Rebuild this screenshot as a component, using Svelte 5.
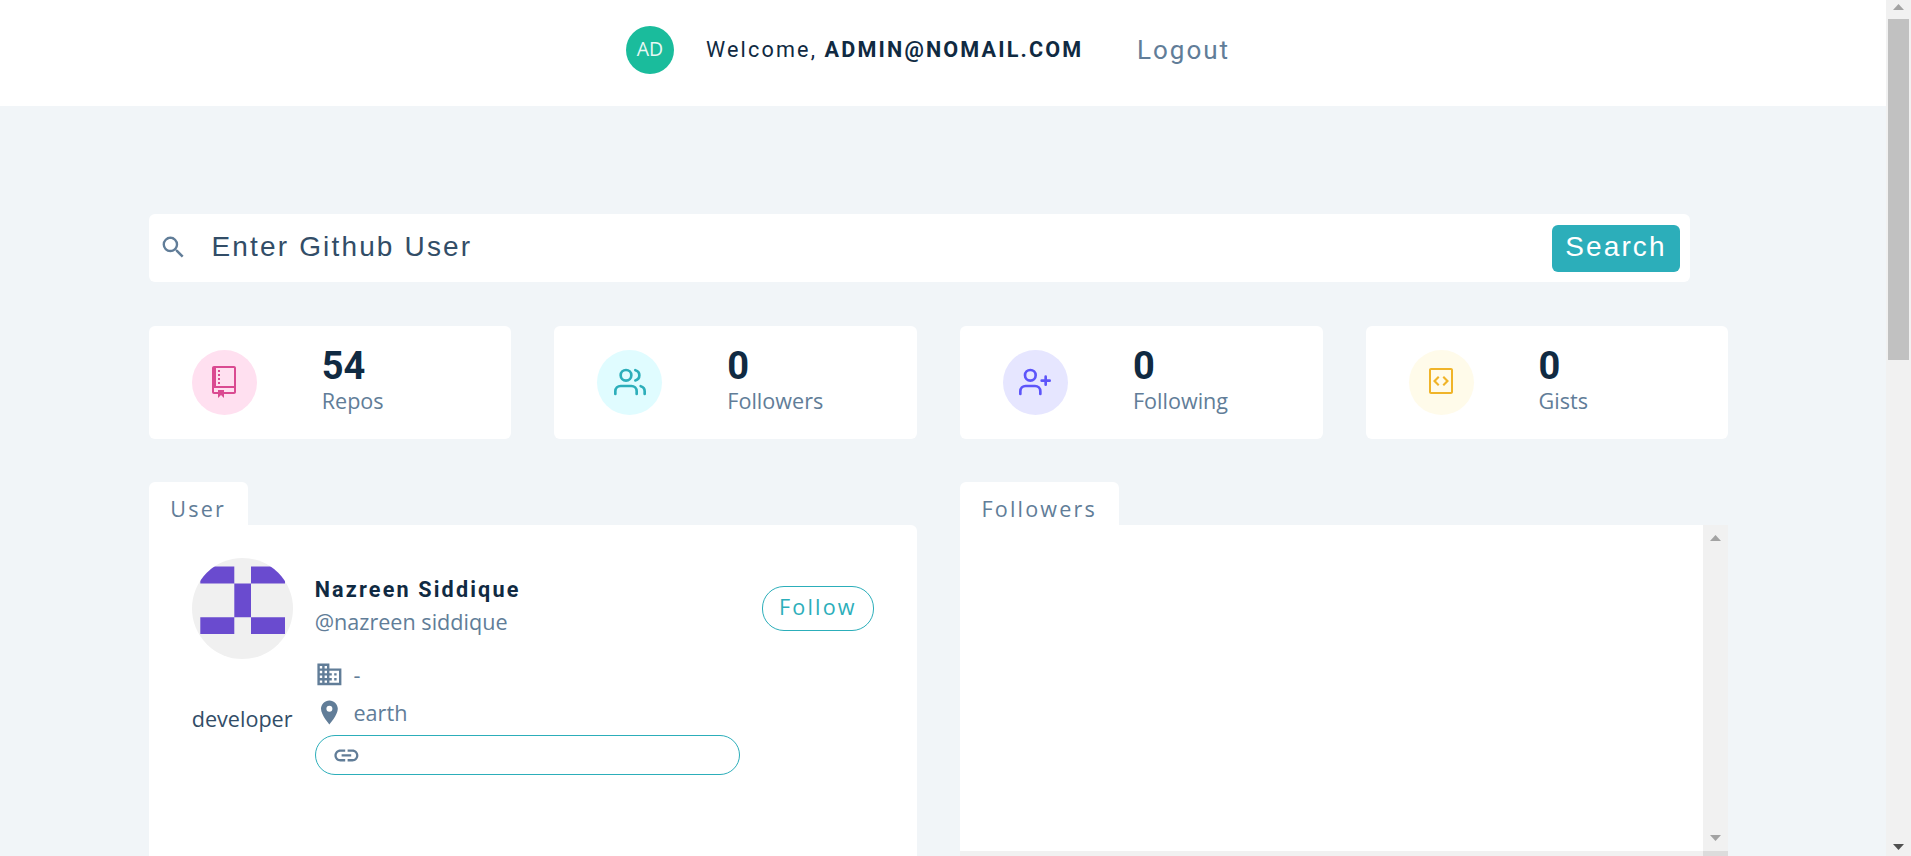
<script>
  const stats = [
    { icon: 'repo', tone: 'pink', value: 54, label: 'Repos' },
    { icon: 'users', tone: 'green', value: 0, label: 'Followers' },
    { icon: 'plus', tone: 'purple', value: 0, label: 'Following' },
    { icon: 'gist', tone: 'yellow', value: 0, label: 'Gists' }
  ];
</script>

<div class="screen">
  <div class="page">
    <nav>
      <div class="initials"><span>AD</span></div>
      <h4>Welcome, <strong>ADMIN@NOMAIL.COM</strong></h4>
      <button class="logout">Logout</button>
    </nav>

    <main>
      <form class="search">
        <svg class="md" viewBox="0 0 24 24"><path d="M15.5 14h-.79l-.28-.27A6.471 6.471 0 0 0 16 9.5 6.5 6.5 0 1 0 9.5 16c1.61 0 3.09-.59 4.23-1.57l.27.28v.79l5 4.99L20.49 19l-4.99-5zm-6 0C7.01 14 5 11.99 5 9.5S7.01 5 9.5 5 14 7.01 14 9.5 11.99 14 9.5 14z" /></svg>
        <span class="placeholder">Enter Github User</span>
        <button type="button">Search</button>
      </form>

      <section class="stats">
        {#each stats as s}
          <article class="stat">
            <span class="badge {s.tone}">
              {#if s.icon === 'repo'}
                <svg viewBox="0 0 12 16" fill="currentColor"><path fill-rule="evenodd" d="M4 9H3V8h1v1zm0-3H3v1h1V6zm0-2H3v1h1V4zm0-2H3v1h1V2zm8-1v12c0 .55-.45 1-1 1H6v2l-1.5-1.5L3 16v-2H1c-.55 0-1-.45-1-1V1c0-.55.45-1 1-1h10c.55 0 1 .45 1 1zm-1 10H1v2h2v-1h3v1h5v-2zm0-10H2v9h9V1z" /></svg>
              {:else if s.icon === 'users'}
                <svg class="line" viewBox="0 0 24 24"><path d="M17 21v-2a4 4 0 0 0-4-4H5a4 4 0 0 0-4 4v2" /><circle cx="9" cy="7" r="4" /><path d="M23 21v-2a4 4 0 0 0-3-3.87M16 3.13a4 4 0 0 1 0 7.75" /></svg>
              {:else if s.icon === 'plus'}
                <svg class="line" viewBox="0 0 24 24"><path d="M16 21v-2a4 4 0 0 0-4-4H5a4 4 0 0 0-4 4v2" /><circle cx="8.5" cy="7" r="4" /><path d="M20 8v6M23 11h-6" /></svg>
              {:else}
                <svg viewBox="0 0 12 16" fill="currentColor"><path fill-rule="evenodd" d="M7.5 5L10 7.5 7.5 10l-.75-.75L8.5 7.5 6.75 5.75 7.5 5zm-3 0L2 7.5 4.5 10l.75-.75L3.5 7.5l1.75-1.75L4.5 5zM0 13V2c0-.55.45-1 1-1h10c.55 0 1 .45 1 1v11c0 .55-.45 1-1 1H1c-.55 0-1-.45-1-1zm1 0h10V2H1v11z" /></svg>
              {/if}
            </span>
            <div class="figures">
              <h3>{s.value}</h3>
              <p>{s.label}</p>
            </div>
          </article>
        {/each}
      </section>

      <section class="panels">
        <div class="panel">
          <div class="tab">User</div>
          <article class="card">
            <header>
              <svg class="avatar" viewBox="0 0 101 101">
                <defs><clipPath id="round"><circle cx="50.5" cy="50.5" r="50.5" /></clipPath></defs>
                <g clip-path="url(#round)">
                  <rect width="101" height="101" fill="#f0f0f0" />
                  <path fill="#6a4bcf" d="M8.3 8.4h34v17h-34zM59 8.4h34v17H59zM42.3 25.4H59v33.8H42.3zM8.3 59.2h34V76h-34zM59 59.2h34V76H59z" />
                </g>
              </svg>
              <div class="who">
                <h4>Nazreen Siddique</h4>
                <p>@nazreen siddique</p>
              </div>
              <button class="follow">Follow</button>
            </header>
            <div class="details">
              <p class="bio">developer</p>
              <div class="links">
                <p><svg class="md" viewBox="0 0 24 24"><path d="M12 7V3H2v18h20V7H12zM6 19H4v-2h2v2zm0-4H4v-2h2v2zm0-4H4V9h2v2zm0-4H4V5h2v2zm4 12H8v-2h2v2zm0-4H8v-2h2v2zm0-4H8V9h2v2zm0-4H8V5h2v2zm10 12h-8v-2h2v-2h-2v-2h2v-2h-2V9h8v10zm-2-8h-2v2h2v-2zm0 4h-2v2h2v-2z" /></svg>-</p>
                <p><svg class="md" viewBox="0 0 24 24"><path d="M12 2C8.13 2 5 5.13 5 9c0 5.25 7 13 7 13s7-7.75 7-13c0-3.87-3.13-7-7-7zm0 9.5a2.5 2.5 0 0 1 0-5 2.5 2.5 0 0 1 0 5z" /></svg>earth</p>
                <div class="site"><svg class="md" viewBox="0 0 24 24"><path d="M3.9 12c0-1.71 1.39-3.1 3.1-3.1h4V7H7c-2.76 0-5 2.24-5 5s2.24 5 5 5h4v-1.9H7c-1.71 0-3.1-1.39-3.1-3.1zM8 13h8v-2H8v2zm9-6h-4v1.9h4c1.71 0 3.1 1.39 3.1 3.1s-1.39 3.1-3.1 3.1h-4V17h4c2.76 0 5-2.24 5-5s-2.24-5-5-5z" /></svg></div>
              </div>
            </div>
          </article>
        </div>

        <div class="panel">
          <div class="tab">Followers</div>
          <div class="list">
            <div class="blank"></div>
            <div class="bar inner">
              <svg viewBox="0 0 11 6"><path fill="#a3a3a3" d="M0 6 5.5 0 11 6z" /></svg>
              <svg viewBox="0 0 11 6"><path fill="#a3a3a3" d="M0 0 5.5 6 11 0z" /></svg>
            </div>
            <div class="track"></div>
            <div class="corner"></div>
          </div>
        </div>
      </section>
    </main>
  </div>

  <div class="bar outer">
    <svg viewBox="0 0 11 6"><path fill="#a3a3a3" d="M0 6 5.5 0 11 6z" /></svg>
    <div class="thumb"></div>
    <svg viewBox="0 0 11 6"><path fill="#505050" d="M0 0 5.5 6 11 0z" /></svg>
  </div>
</div>

<style>
  :global(body) { overflow: hidden; }
  * { box-sizing: border-box; }
  h3, h4, p { margin: 0; }
  button { margin: 0; border: 0; background: none; padding: 0; }
  .screen {
    display: flex;
    width: 1911px;
    height: 856px;
    overflow: hidden;
    background: #f1f5f8;
    color: #324d67;
    font-family: "Open Sans", sans-serif;
    font-size: 21.6px;
  }
  .page { width: 1886px; }
  nav {
    height: 106px;
    padding: 26px 0 0 626px;
    display: flex;
    align-items: flex-start;
    background: #fff;
    font-family: Roboto, sans-serif;
    white-space: nowrap;
  }
  .initials {
    width: 48px;
    height: 48px;
    border-radius: 50%;
    background: #1abc9c;
    color: #e8f8f5;
    font: 400 19.5px/46px "Open Sans", sans-serif;
    text-align: center;
  }
  nav h4 {
    width: 431px;
    margin-left: 32px;
    color: #102a42;
    font-size: 21.6px;
    font-weight: 400;
    line-height: 48px;
    letter-spacing: 2.16px;
  }
  nav strong { font-weight: 700; }
  .logout {
    color: #617d98;
    font: 400 26px/48px Roboto, sans-serif;
    letter-spacing: 2px;
  }
  main { padding: 108px 157.9px 0 148.7px; }
  .search {
    width: 1541.3px;
    height: 68px;
    display: flex;
    align-items: center;
    padding: 0 10px 0 11px;
    border-radius: 6px;
    background: #fff;
    font-family: "Liberation Sans", Arial, sans-serif;
  }
  .md { width: 28.8px; height: 28.8px; fill: #617d98; flex: none; }
  .search .md { margin: 0 .5px 1px -.5px; }
  .placeholder {
    flex: 1;
    margin-left: 23px;
    padding-bottom: 2px;
    font-size: 28px;
    letter-spacing: 2.16px;
    color: #324d67;
  }
  .search button {
    width: 128px;
    height: 47px;
    padding-bottom: 3px;
    border-radius: 6px;
    background: #2caeba;
    color: #fff;
    font: 28px/44px "Liberation Sans", Arial, sans-serif;
    letter-spacing: 2.1px;
  }
  .stats {
    display: grid;
    grid-template-columns: repeat(4, 1fr);
    gap: 43px;
    margin-top: 44px;
  }
  .stat {
    height: 113px;
    display: flex;
    align-items: flex-start;
    padding: 24px 43px;
    border-radius: 6px;
    background: #fff;
  }
  .badge {
    width: 65px;
    height: 65px;
    flex: none;
    display: grid;
    place-items: center;
    border-radius: 50%;
  }
  .badge svg { width: 32px; height: 32px; margin-bottom: 1px; }
  .line {
    fill: none;
    stroke: currentColor;
    stroke-width: 2;
    stroke-linecap: round;
    stroke-linejoin: round;
  }
  .pink { background: #ffe0f0; color: #da4a91; }
  .green { background: #e0fcff; color: #2caeba; }
  .purple { background: #e6e6ff; color: #5d55fa; }
  .yellow { background: #fffbea; color: #f0b429; }
  .figures { margin-left: 65px; }
  .figures h3 {
    color: #102a42;
    font: 700 38px/32px Roboto, sans-serif;
  }
  .figures p { color: #617d98; line-height: 37px; }
  .panels {
    display: grid;
    grid-template-columns: 1fr 1fr;
    gap: 43px;
    margin-top: 43px;
  }
  .panel { display: flex; flex-direction: column; align-items: flex-start; }
  .tab {
    height: 43px;
    padding: 0 21.6px;
    border-radius: 6px 6px 0 0;
    background: #fff;
    color: #617d98;
    line-height: 53px;
    letter-spacing: 2.16px;
  }
  .card {
    width: 100%;
    height: 331px;
    padding: 33px 43px;
    border-radius: 0 6px 0 0;
    background: #fff;
  }
  .card header { display: flex; align-items: center; height: 101px; }
  .avatar { width: 101px; height: 101px; margin-right: 22px; }
  .who { flex: 1; padding-bottom: 4px; }
  .who h4 {
    color: #102a42;
    font: 700 21.6px/30px Roboto, sans-serif;
    letter-spacing: 2.16px;
  }
  .who p { color: #617d98; line-height: 34px; }
  .follow {
    width: 112px;
    height: 45px;
    padding-bottom: 3px;
    border: 1px solid #2caeba;
    border-radius: 22px;
    color: #2caeba;
    font: 21.6px/34px "Open Sans", sans-serif;
    letter-spacing: 2.16px;
  }
  .details { display: flex; }
  .bio { width: 101px; margin-right: 22px; padding-top: 45px; line-height: 30px; }
  .links { width: 425px; color: #617d98; }
  .links p { display: flex; align-items: center; gap: 10px; height: 38px; }
  .links p:first-child { height: 37.5px; margin-top: -3px; }
  .site {
    height: 40px;
    margin-top: 3.5px;
    padding-left: 16px;
    display: flex;
    align-items: center;
    border: 1px solid #2caeba;
    border-radius: 20px;
  }
  .list {
    width: 100%;
    height: 331px;
    display: grid;
    grid-template-columns: 1fr 25px;
    grid-template-rows: 326px 5px;
  }
  .blank { background: #fff; }
  .bar {
    width: 25px;
    display: flex;
    flex-direction: column;
    align-items: center;
    background: #f1f1f1;
  }
  .bar svg { width: 11px; height: 6px; flex: none; }
  .inner { justify-content: space-between; padding: 10px 0; }
  .outer { padding: 4px 0 6px; justify-content: space-between; }
  .thumb { width: 21px; height: 341px; margin: 9px 0 auto; background: #c1c1c1; }
  .track { background: #f1f1f1; }
  .corner { background: #dcdcdc; }
</style>
